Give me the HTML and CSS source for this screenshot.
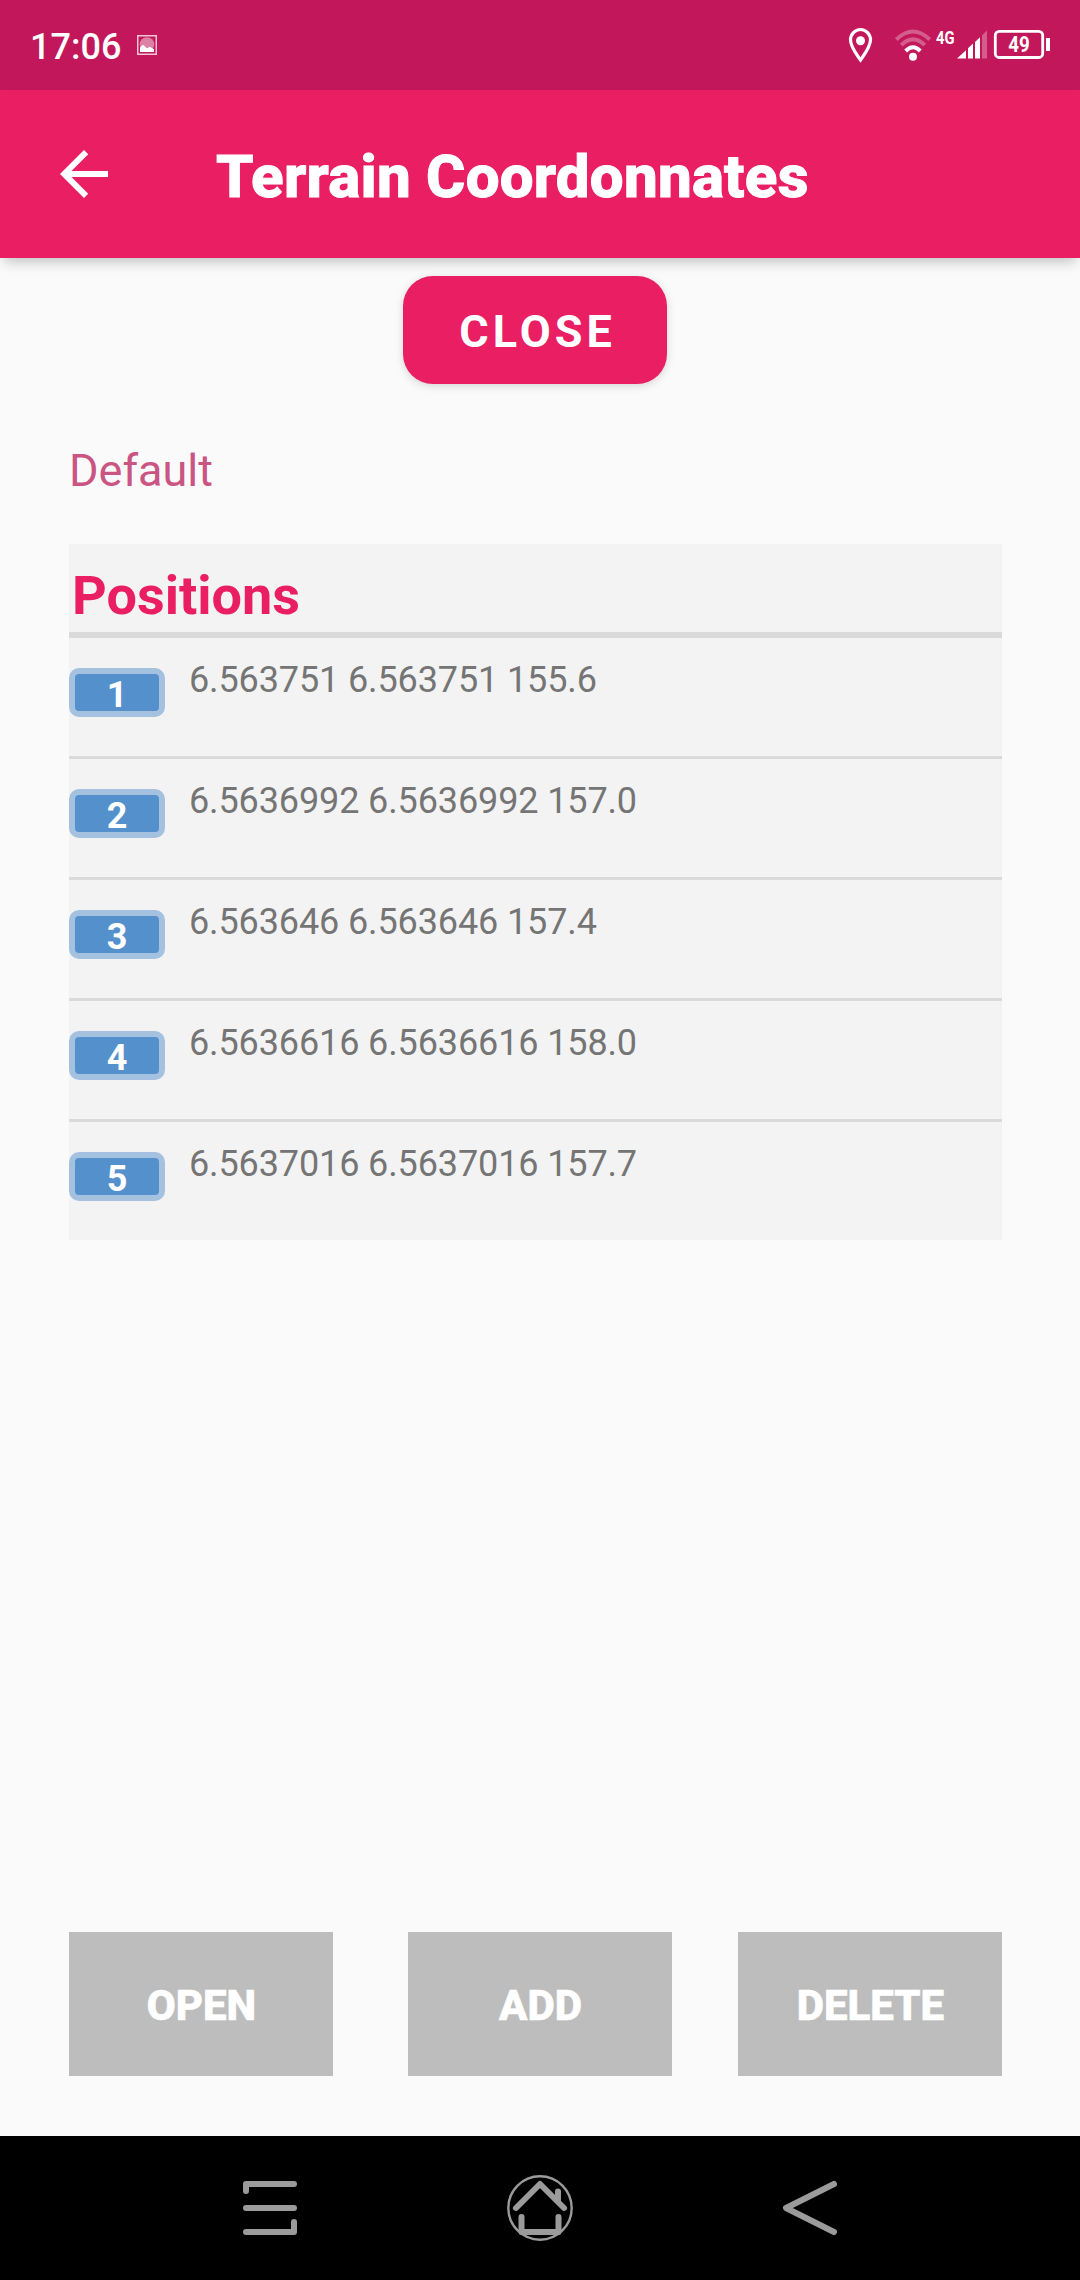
FILE: index.html
```html
<!DOCTYPE html>
<html lang="en">
<head>
    <meta charset="UTF-8">
    <meta name="viewport" content="width=device-width, initial-scale=1.0">
    <title>Terrain Coordonnates</title>
    <link rel="stylesheet" href="styles.css">
</head>
<body>

<div class="status-bar">
    <span class="clock">17:06</span>
    <svg class="icon-picture" width="20" height="20" viewBox="0 0 20 20">
        <rect x="0.75" y="0.75" width="18.5" height="18.5" fill="none" stroke="#fff" stroke-opacity="0.75" stroke-width="1.5"/>
        <circle cx="10" cy="9.5" r="7.3" fill="#fff" fill-opacity="0.45"/>
        <path d="M3 17V12.5L5 10.5Q6 9.5 7 10.5L10 13.5Q13 10.5 14.5 13L17 14V17Z" fill="#fff"/>
    </svg>
    <svg class="icon-system" width="204" height="40" viewBox="0 0 204 40">
        <!-- location -->
        <path d="M12.5 35C8 28.5 2.5 22 2.5 14.8A10 10.3 0 0 1 22.5 14.8C22.5 22 17 28.5 12.5 35Z" fill="none" stroke="#fff" stroke-width="3.2"/>
        <circle cx="12.5" cy="15.8" r="4.5" fill="#fff"/>
        <!-- wifi -->
        <g fill="none" stroke="#fff" stroke-width="4">
            <path d="M48.3 14.5Q65 -1.5 81.7 14.5" stroke-opacity="0.3"/>
            <path d="M53.3 20.2Q65 8.6 76.7 20.2" stroke-opacity="0.3"/>
            <path d="M57.7 26Q65 18.6 72.3 26"/>
        </g>
        <circle cx="65" cy="31.8" r="4" fill="#fff"/>
        <text x="88" y="19" class="network" textLength="18.5" lengthAdjust="spacingAndGlyphs">4G</text>
        <!-- signal -->
        <path d="M109 33.5L118 25.3V33.5Z" fill="#fff"/>
        <path d="M120 33.5V23.3L125 18.6V33.5Z" fill="#fff"/>
        <path d="M127 33.5V17L132 12.2V33.5Z" fill="#fff"/>
        <path d="M134 33.5V10.3L139 5.5V33.5Z" fill="#fff" fill-opacity="0.3"/>
        <!-- battery -->
        <rect x="147.3" y="6.3" width="47.4" height="26.2" rx="4" fill="none" stroke="#fff" stroke-width="2.8"/>
        <rect x="198" y="13" width="4" height="13" fill="#fff"/>
        <text x="160.3" y="27" class="charge" textLength="21.5" lengthAdjust="spacingAndGlyphs">49</text>
    </svg>
</div>

<header class="app-bar">
    <svg class="icon-back" width="72" height="72" viewBox="0 0 24 24">
        <path d="M20 11H7.83l5.59-5.59L12 4l-8 8 8 8 1.41-1.41L7.83 13H20v-2z" fill="#fff"/>
    </svg>
    <h1 class="title">Terrain Coordonnates</h1>
</header>

<main class="content">
    <button type="button" class="close-btn">CLOSE</button>

    <p class="terrain-name">Default</p>

    <div class="positions">
        <h2 class="positions-title">Positions</h2>
        <ul class="positions-list">
            <li><span class="badge">1</span><span class="coords">6.563751 6.563751 155.6</span></li>
            <li><span class="badge">2</span><span class="coords">6.5636992 6.5636992 157.0</span></li>
            <li><span class="badge">3</span><span class="coords">6.563646 6.563646 157.4</span></li>
            <li><span class="badge">4</span><span class="coords">6.5636616 6.5636616 158.0</span></li>
            <li><span class="badge">5</span><span class="coords">6.5637016 6.5637016 157.7</span></li>
        </ul>
    </div>

    <div class="button-container">
        <button type="button" class="action-btn">OPEN</button>
        <button type="button" class="action-btn add-btn">ADD</button>
        <button type="button" class="action-btn">DELETE</button>
    </div>
</main>

<nav class="nav-bar">
    <svg width="72" height="72" viewBox="0 0 72 72">
        <path d="M12 19V12H60M12 36H60M12 60H60V50"/>
    </svg>
    <svg width="72" height="72" viewBox="0 0 72 72">
        <circle cx="36" cy="36" r="31.7"/>
        <path d="M12 36L36 12L60 36M54 19.5V29M17.5 45V60H54.5V45"/>
    </svg>
    <svg width="72" height="72" viewBox="0 0 72 72">
        <path d="M60 12L12 36L60 60"/>
    </svg>
</nav>

</body>
</html>
```

FILE: styles.css
```css
* {
    box-sizing: border-box;
}

body {
    display: flex;
    flex-direction: column;
    width: 1080px;
    height: 2280px;
    margin: 0;
    background-color: #fafafa;
    font-family: Roboto, sans-serif;
}

h1, h2, p, ul {
    margin: 0;
    padding: 0;
}

button {
    border: none;
    font-family: inherit;
    color: #fff;
}

/* Status bar */
.status-bar {
    display: flex;
    align-items: center;
    height: 90px;
    padding: 0 28px 0 30px;
    background-color: #c2185b;
    color: #fff;
}

.clock {
    padding-top: 3px;
    font-size: 36px;
    font-weight: 500;
}

.icon-picture {
    margin-left: 16px;
}

.icon-system {
    margin-left: auto;
}

.network {
    font-size: 19px;
    font-weight: 700;
    fill: #fff;
}

.charge {
    font-size: 22px;
    font-weight: 700;
    fill: #fff;
}

/* App bar */
.app-bar {
    display: flex;
    align-items: center;
    height: 168px;
    padding: 0 48px;
    background-color: #e91e63;
    box-shadow: 0 8px 12px -4px rgba(0, 0, 0, 0.22);
}

.title {
    margin-left: 96px;
    padding-top: 5px;
    color: #fff;
    font-size: 60px;
    font-weight: 800;
    letter-spacing: 0.25px;
    -webkit-text-stroke: 1px #fff;
}

/* Content */
.content {
    display: flex;
    flex: 1;
    flex-direction: column;
    padding: 18px 78px 60px 69px;
}

.close-btn {
    align-self: center;
    width: 264px;
    height: 108px;
    margin-right: 1px;
    padding: 3px 0 0 5px;
    border-radius: 30px;
    background-color: #e91e63;
    box-shadow: 0 2px 8px rgba(0, 0, 0, 0.15);
    font-size: 45px;
    font-weight: 700;
    letter-spacing: 4px;
}

.terrain-name {
    margin-top: 60px;
    color: #ca5583;
    font-size: 45px;
    line-height: 54px;
}

.positions {
    margin-top: 46px;
    background-color: #f3f3f3;
}

.positions-title {
    height: 94px;
    padding: 15px 0 0 3px;
    border-bottom: 6px solid #dadada;
    color: #e91e63;
    font-size: 54px;
    font-weight: 700;
    line-height: 73px;
}

.positions-list {
    list-style: none;
}

.positions-list li {
    display: flex;
    align-items: flex-start;
    height: 121px;
    border-bottom: 3px solid #dadada;
}

.positions-list li:last-child {
    height: 118px;
    border-bottom: none;
}

.badge {
    width: 96px;
    height: 49px;
    margin-top: 30px;
    padding-top: 3px;
    border: 6px solid #a5c1e0;
    border-radius: 10px;
    background-color: #5490cc;
    color: #fff;
    font-size: 36px;
    font-weight: 700;
    line-height: 37px;
    text-align: center;
}

.coords {
    margin: 20px 0 0 24px;
    color: #757575;
    font-size: 36px;
    letter-spacing: -0.12px;
    line-height: 44px;
}

/* Bottom buttons */
.button-container {
    display: flex;
    justify-content: space-between;
    margin-top: auto;
}

.action-btn {
    width: 264px;
    height: 144px;
    padding: 3px 0 0 1px;
    background-color: #bdbdbd;
    font-size: 42px;
    font-weight: 800;
    -webkit-text-stroke: 0.7px #fff;
}

.add-btn {
    margin-left: 9px;
}

/* System navigation */
.nav-bar {
    display: flex;
    align-items: center;
    justify-content: space-between;
    height: 144px;
    padding: 0 234px;
    background-color: #000;
}

.nav-bar path,
.nav-bar circle {
    fill: none;
    stroke: #9b9b9b;
    stroke-width: 6;
    stroke-linecap: round;
    stroke-linejoin: round;
}

.nav-bar circle {
    stroke-width: 2.4;
}
```
